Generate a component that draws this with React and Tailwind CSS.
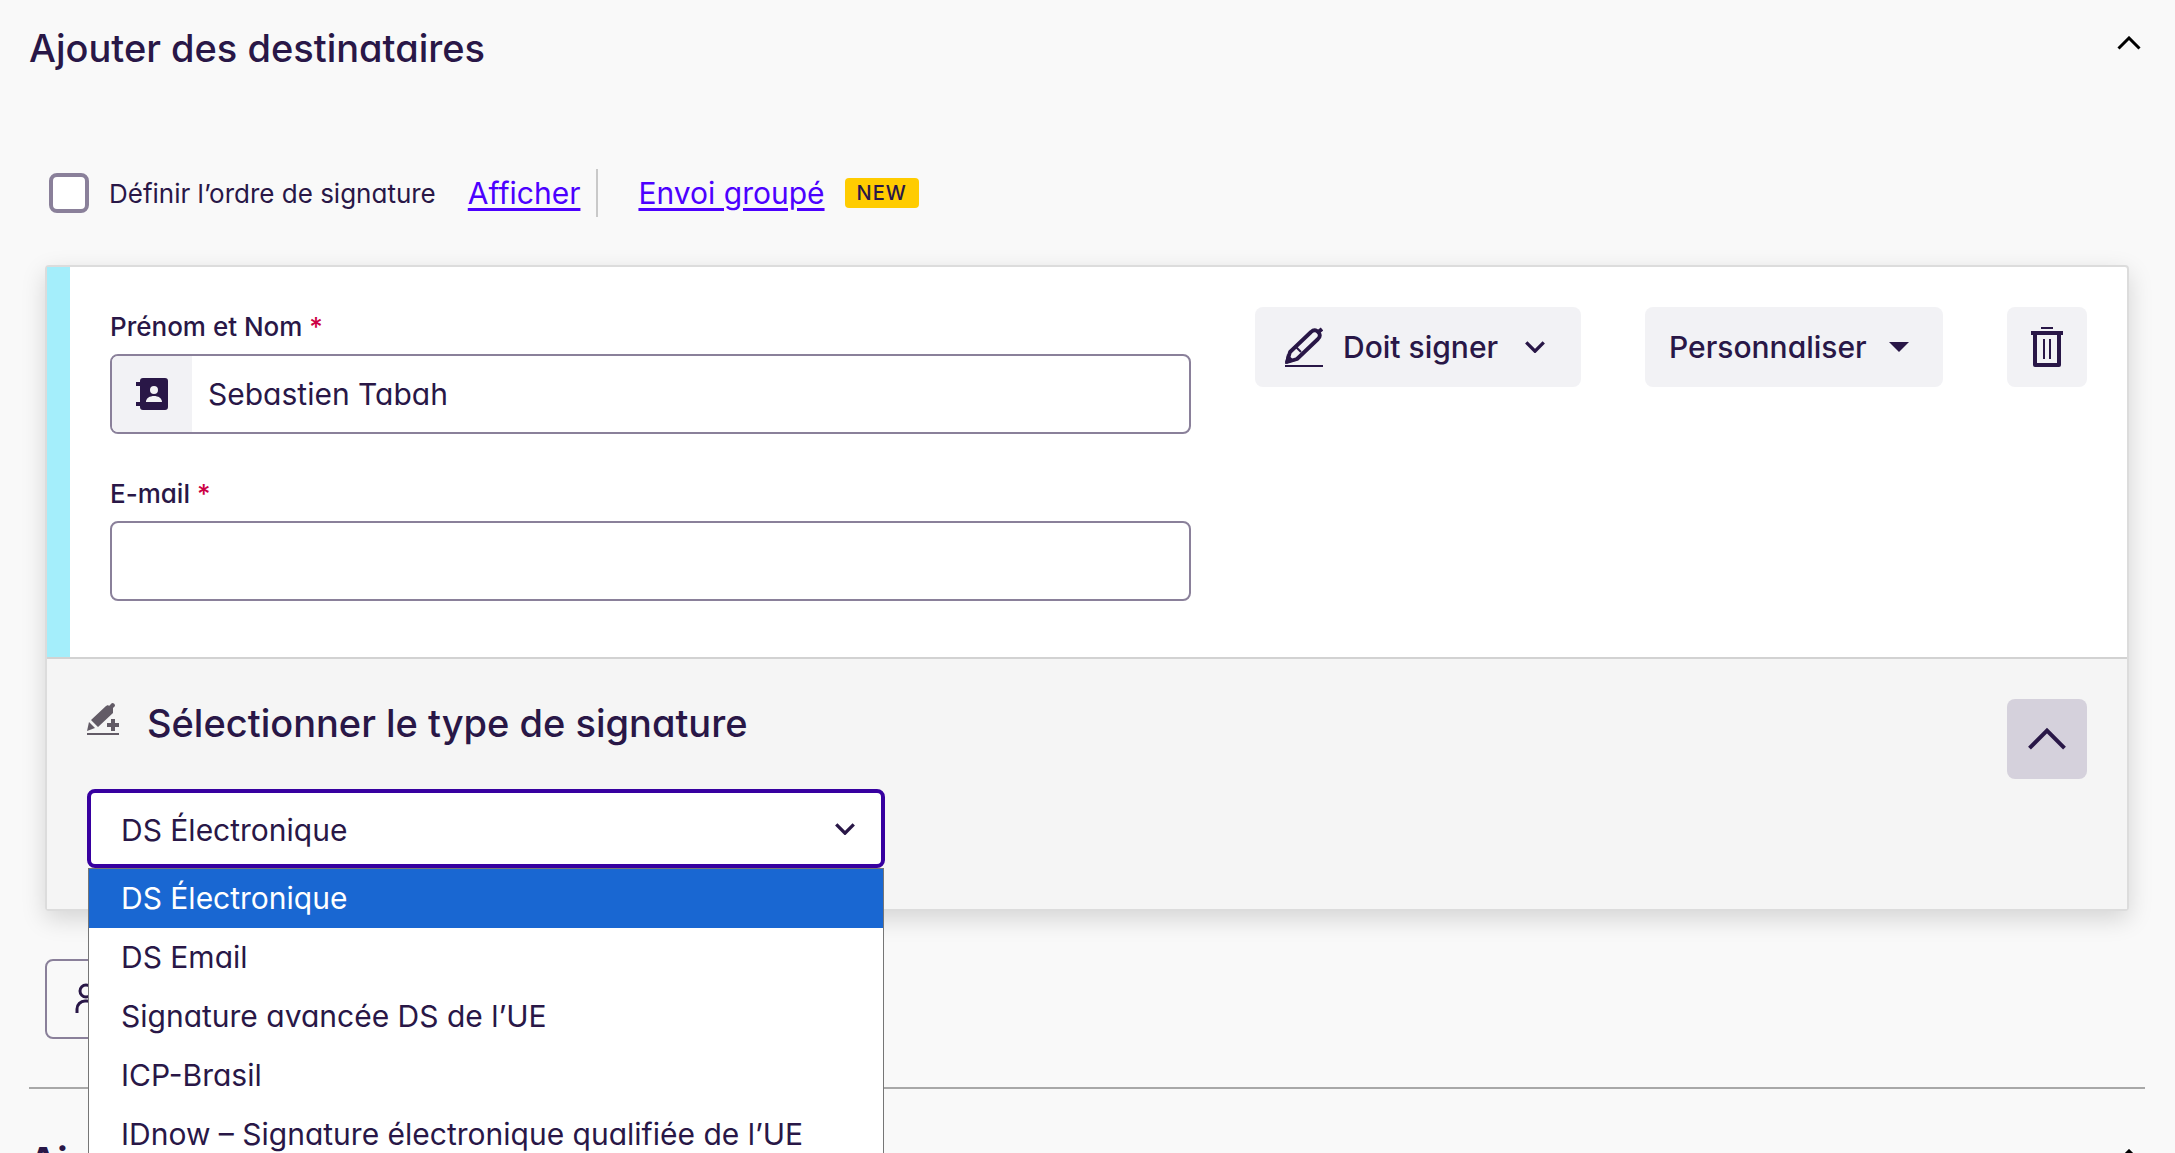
import { useState } from 'react'

const SIGNATURE_TYPES = [
  'DS Électronique',
  'DS Email',
  'Signature avancée DS de l’UE',
  'ICP-Brasil',
  'IDnow – Signature électronique qualifiée de l’UE',
]

function Chevron({ up = false, className, strokeWidth = 3 }) {
  return (
    <svg viewBox="0 0 24 14" fill="none" stroke="currentColor" strokeWidth={strokeWidth} className={className} aria-hidden="true">
      <path d={up ? 'M1.5 12.5 12 2l10.5 10.5' : 'M1.5 1.5 12 12 22.5 1.5'} />
    </svg>
  )
}

function PenIcon() {
  return (
    <svg viewBox="0 0 38 40" fill="none" stroke="currentColor" className="h-10 w-[38px] shrink-0" aria-hidden="true">
      <path d="M2 35 5 25 26 5q3-3 6-1l2 2q2 3-1 6L12 32z" strokeWidth="3.8" strokeLinejoin="round" />
      <path d="M0 37 2 27l8 7z" fill="currentColor" stroke="none" />
      <path d="m11 20 5 5" strokeWidth="2" />
      <path d="m32 6 5-4" strokeWidth="4" />
      <path d="M0 39h38" strokeWidth="2" />
    </svg>
  )
}

function TrashIcon() {
  return (
    <svg viewBox="0 0 32 40" fill="currentColor" className="h-10 w-8" aria-hidden="true">
      <path d="M10 0h12v2H10zM0 4h32v4H0z" />
      <path d="M2 8h4v28h20V8h4v30a2 2 0 0 1-2 2H4a2 2 0 0 1-2-2z" />
      <path d="M12 12h2v20h-2zM18 12h2v20h-2z" />
    </svg>
  )
}

function ContactIcon() {
  return (
    <svg viewBox="0 0 32 32" fill="currentColor" className="size-8" aria-hidden="true">
      <path
        fillRule="evenodd"
        d="M7 0h22a3 3 0 0 1 3 3v26a3 3 0 0 1-3 3H7a3 3 0 0 1-3-3v-1H0v-4h4V8H0V4h4V3a3 3 0 0 1 3-3zm11 8a4 4 0 1 0 0 8 4 4 0 0 0 0-8zm-8 16h16c0-4-4-6-8-6s-8 2-8 6z"
      />
    </svg>
  )
}

function SignaturePlusIcon() {
  return (
    <svg viewBox="0 0 32 32" fill="currentColor" className="size-8" aria-hidden="true">
      <path d="M0 30h32v2H0z" />
      <path d="m19 3 2-1 1 1 3-3q3 0 3 3l-2 2v5L11 24l-7-7z" />
      <path d="m2 19 6 6-8 3z" />
      <path d="M24 16h4v4h4v4h-4v4h-4v-4h-4v-4h4z" />
    </svg>
  )
}

function Field({ id, label, icon, value, onChange, type = 'text' }) {
  return (
    <div className="flex flex-col gap-2">
      <label htmlFor={id} className="text-[26px] leading-[39px] font-medium">
        {label} <span className="text-[#cc0044]">*</span>
      </label>
      <div className="flex h-20 overflow-hidden rounded-lg border-2 border-[#8a809a] bg-white">
        {icon && <span className="flex w-20 shrink-0 items-center justify-center bg-[#f2f2f5]">{icon}</span>}
        <input id={id} type={type} value={value} onChange={onChange} className="min-w-0 flex-1 px-4 text-[30px] outline-none" />
      </div>
    </div>
  )
}

export default function App() {
  const [name, setName] = useState('Sebastien Tabah')
  const [email, setEmail] = useState('')
  const [type, setType] = useState(SIGNATURE_TYPES[0])

  return (
    <div className="h-screen overflow-hidden bg-[#f9f9f9] pr-[30px] pl-[29px] font-['Inter',sans-serif] text-[#291747] [font-feature-settings:'cv11']">
      <header className="flex items-start justify-between pt-6 pr-1">
        <h1 className="text-[38px] leading-12 font-medium">Ajouter des destinataires</h1>
        <button type="button" aria-label="Réduire" className="h-[38px] text-black">
          <Chevron up className="h-[14px] w-6" />
        </button>
      </header>

      <main className="px-4">
        <div className="mt-[97px] flex h-12 items-center">
          <input id="order" type="checkbox" className="ml-1 size-10 appearance-none rounded-lg border-4 border-[#8a809a] bg-white" />
          <label htmlFor="order" className="ml-5 text-[26px]">Définir l’ordre de signature</label>
          <a href="#ordre" className="ml-8 text-[30px] text-[#4c00ff] underline decoration-[3px] underline-offset-4">Afficher</a>
          <span className="mr-10 ml-4 h-12 w-[2px] bg-[#c9c9c9]" />
          <a href="#groupe" className="text-[30px] text-[#4c00ff] underline decoration-[3px] underline-offset-4">Envoi groupé</a>
          <span className="ml-5 rounded-sm bg-[#ffcc00] px-3 text-[20px] leading-[30px] font-medium tracking-wider">NEW</span>
        </div>

        <section className="mt-12 rounded-sm border-2 border-[#dcdcdc] bg-white shadow-[0_8px_24px_rgba(0,0,0,0.15)]">
          <div className="flex border-l-[23px] border-[#a4eefb] px-10 pt-10 pb-14">
            <div className="flex flex-1 flex-col gap-10">
              <Field id="name" label="Prénom et Nom" icon={<ContactIcon />} value={name} onChange={e => setName(e.target.value)} />
              <Field id="email" type="email" label="E-mail" value={email} onChange={e => setEmail(e.target.value)} />
            </div>
            <div className="ml-16 flex items-start gap-16 text-[30px] font-medium">
              <button type="button" className="flex h-20 w-[326px] items-center rounded-lg bg-[#f2f2f5] pr-9 pl-[30px]">
                <PenIcon />
                <span className="ml-5 flex-1 text-left">Doit signer</span>
                <Chevron className="h-3 w-5" strokeWidth={4} />
              </button>
              <button type="button" className="flex h-20 w-[298px] items-center justify-between rounded-lg bg-[#f2f2f5] pr-[34px] pl-6">
                Personnaliser
                <svg viewBox="0 0 20 10" fill="currentColor" className="h-[10px] w-5" aria-hidden="true">
                  <path d="M0 0h20L10 10z" />
                </svg>
              </button>
              <button type="button" aria-label="Supprimer" className="flex size-20 items-center justify-center rounded-lg bg-[#f2f2f5]">
                <TrashIcon />
              </button>
            </div>
          </div>

          <div className="flex items-start justify-between border-t-2 border-[#d2d2d2] bg-[#f5f5f5] px-10 pt-10 pb-[41px]">
            <div className="w-[798px]">
              <h2 className="flex h-12 items-center gap-7 text-[38px] font-medium">
                <span className="mb-2 text-[#625b66]"><SignaturePlusIcon /></span>
                Sélectionner le type de signature
              </h2>
              <div className="relative mt-[42px]">
                <select
                  aria-label="Type de signature"
                  value={type}
                  onChange={e => setType(e.target.value)}
                  className="block h-[79px] w-full appearance-none rounded-lg border-4 border-[#3700a0] bg-white px-[30px] pt-1 text-[30px] outline-none"
                >
                  {SIGNATURE_TYPES.map(t => <option key={t}>{t}</option>)}
                </select>
                <Chevron className="pointer-events-none absolute top-[34px] right-[30px] h-3 w-5" strokeWidth={4} />
                <ul role="listbox" className="absolute inset-x-px top-full z-10 border border-[#767676] bg-white text-[30px] leading-[59px]">
                  {SIGNATURE_TYPES.map(t => (
                    <li
                      key={t}
                      role="option"
                      aria-selected={t === type}
                      onClick={() => setType(t)}
                      className={`px-8 whitespace-nowrap ${t === type ? 'bg-[#1967d2] text-white' : ''}`}
                    >
                      {t}
                    </li>
                  ))}
                </ul>
              </div>
            </div>
            <button type="button" aria-label="Replier" className="flex size-20 items-center justify-center rounded-lg bg-[#d5d1dc]">
              <Chevron up className="h-6 w-10" strokeWidth={2.4} />
            </button>
          </div>
        </section>

        <button type="button" aria-label="Ajouter un destinataire" className="mt-12 flex h-20 w-[400px] items-center rounded-lg border-2 border-[#8a809a] px-7">
          <svg viewBox="0 0 32 32" fill="none" stroke="currentColor" strokeWidth="3" className="size-8" aria-hidden="true">
            <circle cx="11" cy="8" r="6" />
            <path d="M2 30v-4a8 8 0 0 1 8-8h2a8 8 0 0 1 8 8v4M26 12v10M21 17h10" />
          </svg>
        </button>
      </main>

      <footer className="mt-12 flex items-start justify-between border-t-2 border-[#a8a8a8] pt-12 pr-1">
        <h2 className="text-[38px] leading-12 font-bold">Ajouter un message</h2>
        <button type="button" aria-label="Développer" className="h-[38px] text-black">
          <Chevron up className="h-[14px] w-6" />
        </button>
      </footer>
    </div>
  )
}
